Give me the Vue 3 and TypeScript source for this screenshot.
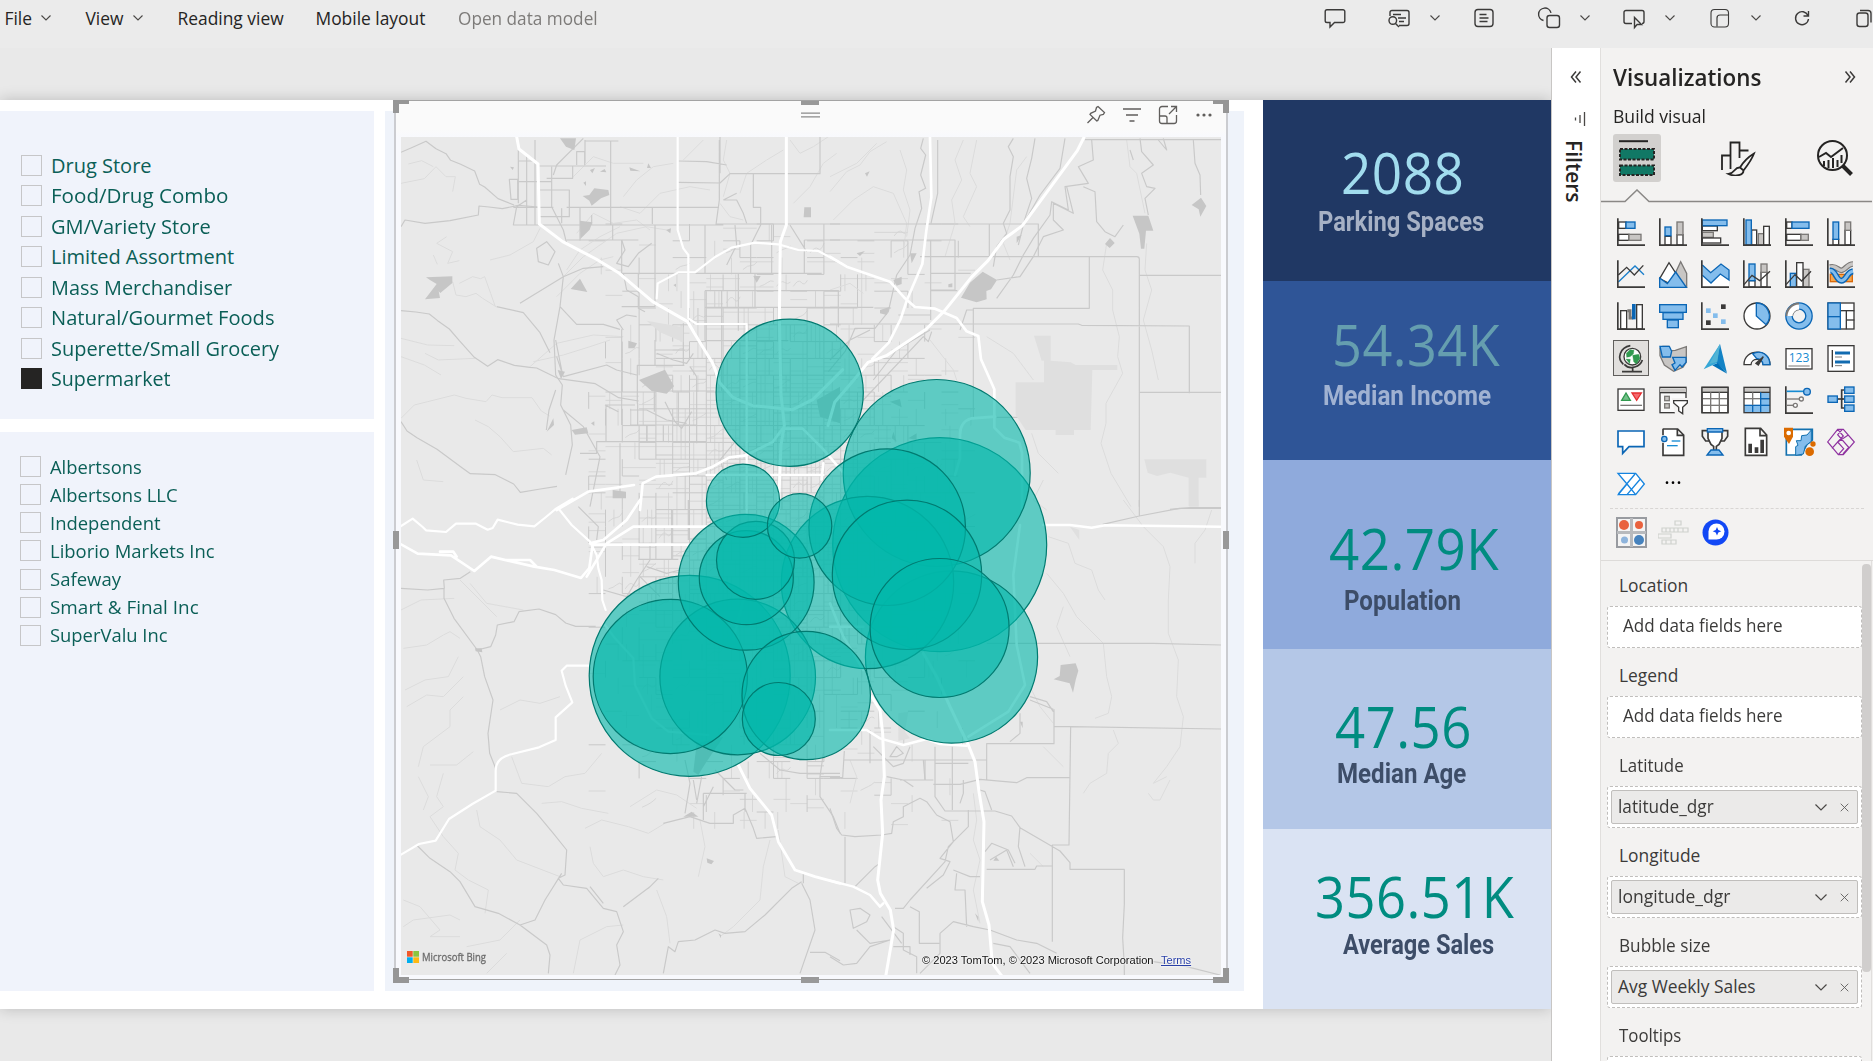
<script setup lang="ts">
interface Option { label: string; width: number; checked?: boolean }
interface Metric { value: string; valueWidth: number; valueLeft: number; label: string; labelWidth: number; labelLeft: number; top: number; gap: number; height: number; tone: string }
interface Field { label: string; width: number; value?: string; valueWidth?: number }
interface Tool { icon: string; gap: number; chevron?: boolean }

// Condenses or expands a run of text horizontally so it occupies the given width.
const vFit = {
  mounted(el: HTMLElement, binding: { value: number }) {
    const natural = el.offsetWidth
    if (!natural) return
    el.style.transform = `scaleX(${binding.value / natural})`
    el.style.marginRight = `${binding.value - natural}px`
  },
}

const storeTypes: Option[] = [
  { label: 'Drug Store', width: 101 },
  { label: 'Food/Drug Combo', width: 177 },
  { label: 'GM/Variety Store', width: 159.5 },
  { label: 'Limited Assortment', width: 183 },
  { label: 'Mass Merchandiser', width: 181 },
  { label: 'Natural/Gourmet Foods', width: 223 },
  { label: 'Superette/Small Grocery', width: 228.5 },
  { label: 'Supermarket', width: 120, checked: true },
]
const owners: Option[] = [
  { label: 'Albertsons', width: 92 },
  { label: 'Albertsons LLC', width: 127.5 },
  { label: 'Independent', width: 111 },
  { label: 'Liborio Markets Inc', width: 165 },
  { label: 'Safeway', width: 71 },
  { label: 'Smart & Final Inc', width: 149 },
  { label: 'SuperValu Inc', width: 117.5 },
]
const metrics: Metric[] = [
  { value: '2088', valueWidth: 123, valueLeft: 78, label: 'Parking Spaces', labelWidth: 166, labelLeft: 55, top: 41.5, gap: 4.5, height: 180.5, tone: 'navy' },
  { value: '54.34K', valueWidth: 168, valueLeft: 69, label: 'Median Income', labelWidth: 168, labelLeft: 59.5, top: 33, gap: 6.5, height: 179, tone: 'royal' },
  { value: '42.79K', valueWidth: 170, valueLeft: 65.5, label: 'Population', labelWidth: 117, labelLeft: 80.5, top: 58, gap: 7.5, height: 189.5, tone: 'sky' },
  { value: '47.56', valueWidth: 137, valueLeft: 71.5, label: 'Median Age', labelWidth: 129, labelLeft: 74, top: 47, gap: 2, height: 179.5, tone: 'mist' },
  { value: '356.51K', valueWidth: 199, valueLeft: 52, label: 'Average Sales', labelWidth: 151, labelLeft: 80, top: 37.5, gap: 2.5, height: 180.5, tone: 'ice' },
]
const fields: Field[] = [
  { label: 'Location', width: 69 },
  { label: 'Legend', width: 59 },
  { label: 'Latitude', width: 65 },
  { label: 'Longitude', width: 81 },
  { label: 'Bubble size', width: 91 },
  { label: 'Tooltips', width: 62 },
]
fields[2].value = 'latitude_dgr'
fields[2].valueWidth = 96
fields[3].value = 'longitude_dgr'
fields[3].valueWidth = 112
fields[4].value = 'Avg Weekly Sales'
fields[4].valueWidth = 138

const bubbles: number[][] = [
  [939.7, 544.7, 107], [689.7, 675.8, 100.5], [936.7, 473, 93.5], [951.5, 657, 86.1], [867.5, 582.5, 86.2],
  [887.2, 527.2, 78.3], [737.7, 677, 77.8], [670.3, 676.5, 77.1], [907, 574.8, 74.7], [789.7, 392.7, 73.6],
  [939.6, 628, 69.5], [746.2, 582.3, 67.9], [806.2, 695.5, 64.2], [746.3, 577.7, 47], [755.5, 560.3, 39],
  [743, 500.7, 36.6], [778.8, 719, 36.5], [799.6, 525.9, 32.2],
]
const tools: Tool[] = [
  { gap: 0, icon: '<path d="M4 3.7h16a1.8 1.8 0 0 1 1.8 1.8v9.2a1.8 1.8 0 0 1-1.8 1.8h-8.5L7 21v-4.500H4a1.800 1.800 0 0 1-1.800-1.800V5.500A1.800 1.800 0 0 1 4 3.700z"/>' },
  { gap: 40, chevron: true, icon: '<path d="M3 10V6.500a2 2 0 0 1 2-2h15a2 2 0 0 1 2 2v11a2 2 0 0 1-2 2h-8M6 8.500h8M11 12h8M12 15.500h5"/><circle cx="5.800" cy="14.500" r="3.800"/><path d="M8.500 17.500l3.500 3.500"/>' },
  { gap: 31.4, icon: '<rect x="3" y="3.500" width="18" height="17" rx="3"/><path d="M7.500 8.500h7M7.500 12h9M7.500 15.500h8"/>' },
  { gap: 40.6, chevron: true, icon: '<path d="M6.500 14.500A6.300 6.300 0 1 1 14 6.800"/><rect x="10" y="9.500" width="12.500" height="12" rx="2.500"/>' },
  { gap: 31.6, chevron: true, icon: '<path d="M10 17.500H4a2 2 0 0 1-2-2v-9a2 2 0 0 1 2-2h16a2 2 0 0 1 2 2v9a2 2 0 0 1-2 2"/><path d="M12.500 11.500v10l2.600-3h4.400z"/>' },
  { gap: 31.6, chevron: true, icon: '<rect x="3" y="3.500" width="17.500" height="17.500" rx="3.500" stroke-width="1.100"/><path d="M9 20.500V12a3 3 0 0 1 3-3h8.500" stroke-width="1.200"/>' },
  { gap: 28.2, icon: '<path d="M18 9.500A6.500 6.500 0 1 0 18.500 13M18.500 5v5h-5"/>' },
  { gap: 38, icon: '<rect x="5" y="7" width="11" height="13.500" rx="2.500"/><path d="M8 4.500h8a3 3 0 0 1 3 3v9"/>' },
]

const D = '#3b3a39', B = '#0b66b5', L = '#84bdec', G = '#7b7977', S = '#c8c6c4'
const box = (x: number, y: number, w: number, h: number, fill: string, stroke: string) =>
  `<rect x="${x}" y="${y}" width="${w}" height="${h}" fill="${fill}" stroke="${stroke}" stroke-width="4"/>`
const axis = `<path d="M2.500 1V81.500H84" fill="none" stroke="${D}" stroke-width="5"/>`
const line = (points: string, stroke: string, w = 4) => `<polyline points="${points}" fill="none" stroke="${stroke}" stroke-width="${w}"/>`
const shape = (d: string, fill: string, stroke: string, w = 4) => `<path d="${d}" fill="${fill}" stroke="${stroke}" stroke-width="${w}"/>`
const dot = (x: number, y: number, r: number, fill: string, stroke = 'none', w = 4) => `<circle cx="${x}" cy="${y}" r="${r}" fill="${fill}" stroke="${stroke}" stroke-width="${w}"/>`

const gallery: string[] = [
  box(5, 12, 22, 19, '#fff', D) + box(27, 12, 27, 19, L, B) + box(5, 49, 31, 18, '#fff', D) + box(36, 49, 36, 18, S, G) + axis,
  box(18, 55, 18, 26, '#fff', D) + box(18, 27, 18, 26, L, B) + box(54, 50, 18, 31, '#fff', D) + box(54, 12, 18, 38, S, G) + axis,
  box(4, 24, 45, 14, '#fff', D) + box(4, 6, 74, 17, L, B) + box(4, 43, 33, 15, S, G) + box(4, 60, 55, 15, '#fff', D) + axis,
  box(26, 36, 15, 45, '#fff', D) + box(9, 6, 16, 75, L, B) + box(46, 47, 16, 34, S, G) + box(62, 25, 17, 56, '#fff', D) + axis,
  box(5, 12, 16, 19, '#fff', D) + box(21, 12, 51, 19, L, B) + box(5, 49, 43, 18, '#fff', D) + box(48, 49, 22, 18, S, G) + axis,
  box(18, 64, 17, 17, '#fff', D) + box(18, 12, 17, 52, L, B) + box(54, 37, 17, 44, '#fff', D) + box(54, 12, 17, 25, S, G) + axis,

  line('4,66 54,18 81,44', '#1b7fcb') + line('4,45 29,22 52,45 79,16', D) + axis,
  shape('M46 46L65 5 83 40V82H60z', S, G) + shape('M2 56L30 8 52 42 30 70z', '#fff', D) + shape('M2 54L25 71 50 36 82 82H2z', L, B),
  shape('M4 46L30 69 58 42 84 60V82H4z', '#fff', 'none') + shape('M4 15L29 38 60 12 84 30V60L58 42 30 69 4 46', L, B) + axis,
  box(18, 62, 18, 19, '#fff', D) + box(18, 12, 18, 50, L, B) + box(54, 37, 18, 44, '#fff', D) + box(54, 12, 18, 25, S, G) + line('3,74 27,46 50,62 81,34', D) + axis,
  box(16, 40, 18, 41, L, B) + box(54, 28, 18, 53, S, G) + box(35, 8, 19, 73, '#fff', D) + line('3,74 30,44 50,63 78,34', D) + axis,
  box(10, 43, 66, 22, '#f7a54a', '#d9690b') + shape('M9 21C29 16 32 31 43 31S61 12 78 12', 'none', G, 17) + shape('M9 21C29 16 32 31 43 31S61 12 78 12', 'none', S, 10) + shape('M9 32C26 29 27 62 43 62S58 37 78 34', 'none', B, 18) + shape('M9 32C26 29 27 62 43 62S58 37 78 34', 'none', L, 9) + axis,

  box(11, 26, 18, 55, '#fff', D) + shape('M31 26H39V48H49', 'none', G, 9) + box(47, 8, 7, 42, B, B) + box(59, 8, 17, 73, '#fff', D) + axis,
  box(2, 8, 80, 23, L, B) + box(12, 32, 60, 20, L, B) + box(25, 54, 33, 23, L, B),
  `<rect x="60" y="7" width="14" height="14" fill="${D}"/><rect x="15" y="19" width="14" height="14" fill="${L}"/><rect x="36" y="34" width="14" height="14" fill="${L}"/><rect x="60" y="52" width="14" height="14" fill="${L}"/><rect x="15" y="55" width="14" height="14" fill="${D}"/>` + axis,
  dot(42, 42, 39, '#fff', D) + shape('M40 3V42L69 68A39 39 0 0 0 40 3z', L, B),
  dot(42, 42, 30, 'none', B, 23) + dot(42, 42, 30, 'none', L, 15) + shape('M13 42A29 29 0 0 1 42 13', 'none', G, 23) + shape('M15 42A28 28 0 0 1 42 15', 'none', '#fff', 15),
  box(3, 3, 78, 78, '#fff', D) + line('42,26 82,26', D) + line('58,26 58,82', D) + line('58,54 82,54', D) + box(3, 3, 37, 41, L, B) + box(3, 44, 37, 37, L, B),

  dot(46, 38, 25, '#fff', D) + shape('M28 28l11-11 12 2-2 11-10 8-10 2zM47 34l18-3 4 12-11 17-8-7zM27 45l13 1-2 13z', '#319a4f', '#319a4f', 1) + shape('M40 5C8 11-1 43 19 61M22 61C39 80 70 68 76 48M47 70V82M15 83H75', 'none', D, 5),
  shape('M3 12L11 7H29L35 20 49 19 82 8V54L72 70 44 82 16 63 3 35z', S, G) + shape('M3 7H31L38 22 34 39H10z', L, B) + shape('M41 40H81V55L69 69 63 62 48 79 39 62 48 57z', L, B),
  '<path d="M57 0L8 76 50 56z" fill="#35a7d6"/><path d="M57 0L78 88 47 57z" fill="#1383c5"/><path d="M50 57L78 89 34 64z" fill="#0071b9"/><path d="M57 0L25 60 49 53z" fill="#52b4d5"/>',
  shape('M3 62C3 12 81 12 81 62H60C59 41 25 41 24 62z', '#fff', D) + shape('M29 29C57 15 80 35 81 62H60C59 50 50 43 41 44z', L, B) + shape('M39 58L61 38 46 63z', D, D),
  box(3, 14, 78, 61, '#fff', D) + '<text x="11" y="55" font-family="Open Sans, sans-serif" font-size="37" textLength="62" lengthAdjust="spacingAndGlyphs" fill="#168bd2">123</text>' + line('10,66 74,66', G, 3),
  box(3, 5, 78, 77, '#fff', D) + line('16,18 16,70', D) + line('24,27 69,27', '#126bb0', 9) + line('24,54 69,54', '#126bb0', 9) + line('24,39 45,39', G, 3) + line('24,65 45,65', G, 3),

  box(3, 9, 78, 64, '#fff', D) + shape('M14 43L27 21 40 43z', '#74c08a', '#319a4f') + shape('M45 21H73L59 43z', '#f46c70', '#e52e30') + line('10,58 75,58', G, 4),
  box(3, 4, 78, 76, '#fafafa', D) + line('3,13 81,13', S, 12) + line('3,20 81,20', D) + box(17, 31, 14, 13, S, G) + box(17, 53, 14, 13, S, G) + '<path d="M38 36H92V84H48z" fill="#f3f2f1"/>' + shape('M44 44H85V51L71 64V83L59 75V64L44 51z', '#fff', D),
  box(3, 4, 78, 76, '#fff', D) + line('3,12 81,12', S, 12) + line('3,19 81,19', D) + line('3,38 81,38', G) + line('3,58 81,58', G) + line('29,19 29,80', G) + line('55,19 55,80', G) + box(3, 4, 78, 76, 'none', D),
  '<path fill="#fff" d="M3 20h78v60H3z"/>' + `<path fill="${L}" d="M52 20h29v60H3V58h49z"/>` + line('3,12 81,12', S, 12) + line('3,19 81,19', D) + line('3,38 81,38', G) + line('3,58 81,58', B) + line('29,19 29,58', G) + line('29,58 29,80', B) + line('53,19 53,80', B) + line('53,38 81,38', B) + box(3, 4, 78, 76, 'none', D),
  axis + line('5,16 56,16', '#168bd2', 5) + dot(66, 17, 10, L, B) + line('6,39 43,39', G) + dot(49, 39, 6, '#fff', G) + line('6,58 25,58', G) + dot(31, 58, 6, '#fff', G),
  line('30,39 48,39', D, 5) + line('52,12 44,12 44,66 52,66', D, 5) + line('44,39 54,39', D, 5) + box(3, 30, 28, 19, L, B) + box(53, 3, 28, 19, L, B) + box(53, 30, 28, 19, L, B) + box(53, 57, 28, 19, L, B),

  shape('M3 9H81V56H36L17 76V56H3z', '#fff', B, 5),
  shape('M11 3H56L74 21V82H12V44M12 22V3M55 3V22H74', '#fff', D, 5) + dot(16, 33, 8, L, B) + line('38,39 64,39', '#168bd2') + line('24,53 56,53', '#168bd2'),
  shape('M22 8H4V25L14 39H27M62 8H80V25L70 39H57', 'none', D, 5) + shape('M21 4H63V31L54 49 46 55V70H38V55L30 49 21 31z', '#fff', D, 5) + line('20,7 64,7', L, 9) + shape('M19 2H65V12H19zM30 66H54L66 81H18z', L, B),
  shape('M7 1H53L71 21V82H7zM51 1V23H71', '#fff', D, 5) + `<path fill="${D}" d="M16 47h11v28H16zM35 58h11v17H35zM52 35h11v40H52z"/>`,
  '<path d="M4 4H82V36L66 49 59 62 49 81H4z" fill="#fff" stroke="#1371af" stroke-width="5"/><path d="M50 23l16-2 13-15v34L61 54 55 78 32 82V56L39 52 34 38H48z" fill="#84bdec" stroke="#1371af" stroke-width="3"/><path d="M-3-1H24V26L12 48-3 26z" fill="#db6b00"/><circle cx="11" cy="15" r="7" fill="#fff"/><circle cx="84" cy="48" r="8" fill="#db6b00"/><circle cx="74" cy="71" r="13" fill="#db6b00"/>',
  shape('M32 4H49L82 42 49 80H34L2 42zM46 4L32 20 65 58 48 78M34 80L50 62 32 42 65 20M32 4L49 24 32 42 15 61', 'none', '#8f32a0', 3.500),

  shape('M3 10H56L82 42 56 74H4L30 42zM3 10L30 42M54 12L4 72M70 27L30 74M30 42L56 74', '#fff', '#1584df', 4),
  '<circle cx="24" cy="38" r="4"/><circle cx="42" cy="38" r="4"/><circle cx="60" cy="38" r="4"/>',
]

// Residential streets: a mile grid that breaks up and gets denser toward downtown.
let seed = 77
const rand = () => (seed = (seed * 1664525 + 1013904223) % 4294967296) / 4294967296
const streets = (() => {
  let arterial = '', local = ''
  const mile = 16.8
  for (let i = -2; i < 21; i++) {
    for (let j = 0; j < 36; j++) {
      const x = 622.3 + i * mile, y = 224 + j * mile
      const near = Math.exp(-(((x - 765) / 135) ** 2 + ((y - 500) / 200) ** 2))
      if (rand() < near * 1.5) arterial += `M${x} ${y}v${mile}`
      if (rand() < near * 1.5) arterial += `M${x} ${y}h${mile}`
      for (let k = 0; k < 5; k++) {
        if (rand() < near * 0.85) {
          const o = (1 + Math.floor(rand() * 3)) * 4.2
          local += rand() < 0.5 ? `M${x + o} ${y}v${mile}` : `M${x} ${y + o}h${mile}`
        }
      }
      if (rand() < near * 0.5) local += `M${x + 3} ${y + 12}q5 ${-9 * rand()} 8 -4t6 ${-6 * rand()}`
    }
  }
  return { arterial, local }
})()
</script>

<template>
  <div class="app">
    <header class="toolbar">
      <nav class="menu">
        <span class="entry file"><span v-fit="28" class="fit">File</span><svg class="chev" viewBox="0 0 12 12"><path d="M1.500 3.500L6 8l4.500-4.500" /></svg></span>
        <span class="entry view"><span v-fit="38" class="fit">View</span><svg class="chev" viewBox="0 0 12 12"><path d="M1.500 3.500L6 8l4.500-4.500" /></svg></span>
        <span class="entry reading"><span v-fit="106" class="fit">Reading view</span></span>
        <span class="entry mobile"><span v-fit="110" class="fit">Mobile layout</span></span>
        <span class="entry muted"><span v-fit="139.500" class="fit">Open data model</span></span>
      </nav>
      <div class="tools">
        <span v-for="(t, i) in tools" :key="i" class="tool" :style="{ marginLeft: t.gap + 'px' }">
          <svg class="tool-icon" viewBox="0 0 24 24" v-html="t.icon"></svg>
          <svg v-if="t.chevron" class="chev" viewBox="0 0 12 12"><path d="M1.500 3.500L6 8l4.500-4.500" /></svg>
        </span>
      </div>
    </header>

    <div class="workspace">
      <main class="stage">
        <div class="page">
          <div class="slicers">
            <section class="slicer types">
              <div v-for="o in storeTypes" :key="o.label" class="option">
                <i class="check" :class="{ on: o.checked }"></i><span v-fit="o.width" class="fit">{{ o.label }}</span>
              </div>
            </section>
            <section class="slicer owners">
              <div v-for="o in owners" :key="o.label" class="option">
                <i class="check"></i><span v-fit="o.width" class="fit">{{ o.label }}</span>
              </div>
            </section>
          </div>

          <section class="map-panel">
            <div class="visual">
              <div class="visual-head">
                <svg class="grip" viewBox="0 0 20 6"><path d="M0 1h20M0 5h20" /></svg>
                <svg class="act" viewBox="0 0 20 20"><path d="M12 1.500l6.500 6-1.200 2-3.300.7-2.200 5.300-1 .5L4 9.500l.7-1.200L9.500 6l1-3.500zM7 12.500L1.500 18" /></svg>
                <svg class="act" viewBox="0 0 20 20"><path d="M1 4h18M4 10h12M7.500 16h5" /></svg>
                <svg class="act" viewBox="0 0 20 20"><path d="M10 1.500H4a2.500 2.500 0 0 0-2.500 2.500v12A2.500 2.500 0 0 0 4 18.500h12a2.500 2.500 0 0 0 2.500-2.500v-6M1.500 11H7a2 2 0 0 1 2 2v5.500M11 9l7-7M13 1.500h5.500V7" /></svg>
                <svg class="act dots" viewBox="0 0 20 20"><circle cx="4" cy="10" r="1.600" /><circle cx="10" cy="10" r="1.600" /><circle cx="16" cy="10" r="1.600" /></svg>
              </div>
              <div class="map">
                <svg class="map-art" viewBox="401 137 820 838">
                  <rect x="401" y="137" width="820" height="838" fill="#e9e9e9" />
                  <g fill="none" stroke-linejoin="round">
                    <path :d="streets.local" stroke="#d2d2d2" stroke-width=".8" />
                    <path :d="streets.arterial" stroke="#c8c8c8" stroke-width="1" />
                  </g>
                  <!-- north-west -->
                  <g transform="translate(390 90) scale(.33333)" fill="none" stroke-linejoin="round">
                    <g stroke="#dcdcdc" stroke-width="3">
                      <path d="M33 280l70-14 35-36 30 30 28 0-8 45M130 230l-35-18-40 10M170 440l-30 20 48 25-15 35 35-8M130 495l12 28M208 580l40-20 24 6 12-6 18 50 14 40M188 575l10 40 30 5 30-10 20 15 40 25M33 745l80 20 80 2M105 790l40 20 110-5M33 800l70 25 50 30M33 985l40-40 40-10 80-20 35 10 60 10 18-20 30 8 90 0 28 40 25 15M255 990l40 20 35 30 40 45 90-10 25 20M80 1110l20 60 60 5M300 510l60-15 70-40 20-40M420 830l80-70 110-25 90 5M430 815l90-20 80-25 60-20M520 560l60-60 100-70 90-20 60 10M530 540l40-60 60-40 60-30M500 620l70-70 60-40 40-10M700 320l40-50 50-40 60-10M690 350l60 20 60-60 90-20 60 10M1010 150l-10 60 20 40-20 70M1050 310l20-60 60-40 50-30M880 210l60-60M990 340l30 40 40 10M550 260l60-60 60 20 90 0M560 430l50-60 60 30 70-10 40 30M1200 150l30 40 40-20 60-40M1210 340l50-50 40-70 40-30" />
                    </g>
                    <g stroke="#c9c9c9" stroke-width="3.500">
                      <path d="M33 187l35-15 40-18 30 22 30 15 14 20 30 12 42 20 15 40 15 8 40 35 48 19M33 410l12-20 60 10 75-8 85-17 2-27 30 3 40 5 48-10 60 5" />
                      <path d="M33 662l45 4 40 6 25 20 35 25 30 35 45 50 40 27 30-20 50 17 47 6 20 2 66 32 110 15 70 42 60 10M33 995l18 28 30 20 60 35 75 55 25 18 75 3 55 28 20 25 60-10 50-8" />
                      <path d="M410 330l-30 20-10 55 78 0M358 268h25v60h-20zM385 180v160M410 195v210M435 150v255M385 213h50M385 275h100M370 352h120M448 405h552M448 380h90v-80h-90M485 230v120l35 70 10 40M448 228h200M470 265h78v-38M560 225v-40h24v40M585 150v70M548 265v-35M490 255l10-30 80-80M585 153h100M440 475l30-20 25 30-20 40-30-10zM505 520l15 40-10 90-18 100 5 105 20 30-5 60 30 60 5 60-20 90M520 560l-130 80M510 650l50 53h80l50 15M520 560l60-25 60-5M497 750l20 100M500 800l20 60 130-35 30 15 60 15M497 900l-20 60-8 60M520 960l60 50 50 90-30 150M400 668l-80-18M400 668l50 60 30 60M530 450h215M695 550h600M662 153v252M668 405v45M570 352v100M605 405v-30M515 355v45M530 352h457M695 450v100M795 405v245M745 550v60M787 352v50M865 213l85 2 60 10M865 277l125 2 30-28h270v-111M988 150v180l-10 74M990 250v-110M1090 250v102h22v53l-30 60v85M978 402h372M1145 405v145M1035 405l5 60-30 60M945 405v145M880 410v0M695 650h100M695 718v287M795 750v76h-53v115M743 826h140M880 700v125M920 860l-20-30M945 602h400M945 602v150M945 652h400M945 752h250M995 602v300M1045 552v170M1095 552v100M793 780h90M720 1005h200M645 945h90M648 945v110h300M743 940v65M770 1005v50M820 1005v50M650 1055h-30v35h-50M690 1060v160M645 945l40 20M742 826v30M865 905v100M793 903h180M793 905v60M920 860v200M865 903h60M890 1000l-60-10-60-30-50 0" />
                      <path d="M695 450l10 30-25 40 35 10 30-40 40-30M700 550l10 50 35 20 0 35 20 10M700 720l-20-30 30-15 30 5M1040 310l-40 20M1000 330h40l20 40 10 30M1040 1050l-50 60 20 60M800 790l50 20 40 10 20-30M825 935l30 60 20 20 30-50M1200 405l50 80M1243 450h107M1243 450v100" />
                    </g>
                    <g fill="#c6c6c6" stroke="none">
                      <path d="M510 145h48l-5 35-25-10zM578 318l20-3 15-20 42 5 3 15-25 10-28 22-7-15zM570 392l37 5-8 22-28 28zM570 566l22 40-50-9zM108 562l79-3v20l-36 30-5-5 4 20-45 4 35-46-20-12zM747 870l78-31 27 50-22 22-45-8zM715 752l26 8-8 15h-18zM545 1020l45-8 5 18-40 4zM470 1025l20-40 2 20zM503 840l22 5-12 22zM1243 352h20v30h-22zM1090 558l22 0-12 20zM718 232l33 12-30-2zM828 420l15-5-2 15zM1280 930l70-40v110l-60-20z" />
                      <path d="M600 240l15-6-8 16zM630 245l14-8 5 10zM775 220l8 14h-12zM580 278l8-4v14zM603 1000l10-6v14zM850 585l8-4v10zM668 1200l40 5v20h-40zM360 230l12 2-4 8z" />
                      <path d="M770 692l110 20v45l-70-30z" fill="#dfdfdf" />
                    </g>
                    <g stroke="#fff" stroke-width="6.500" stroke-linecap="round">
                      <path stroke-width="9" d="M380 140l7 37 57 45 4 180 70 53 100 52 70 43 100 85 105 60 20 35 55 90 5 12 15 45 40 45 60 25 120 12 60-30 90-90" />
                      <path stroke-width="9" d="M1189 140v265l-18 50-3 230 5 230 10 90-10 60-8 200" />
                      <path d="M863 140v280l17 55 15 20v190l25 17h150v570M800 625l3-45 62-33 50 0 60-46 50-28 70-15 70 5 60 17 60 3 70 38" />
                      <path stroke-width="8" d="M500 1260l95-55 70-10 67-10M750 1260l8-80 40-20 120-10 50-20 50-28 50-6 80-40 30-40 60 0 60 60 60 70M950 1155h350M1300 1120l-5 48" />
                    </g>
                  </g>
                  <!-- north-east -->
                  <g transform="translate(830 90) scale(.33333)" fill="none" stroke-linejoin="round">
                    <g stroke="#dcdcdc" stroke-width="3">
                      <path d="M0 305l50-60 40-20 30-40 50-30M0 260l80-40 60-60M10 390l60-60 60-40 60 20 40 90-10 90M210 180l20 60-10 60 20 60-10 80M400 150l-25 60 20 60-30 60 10 70-30 100M440 150l-20 100 20 40-40 90 20 30M590 200l-30 40-20 160-20 60 20 50M890 150l10 80 20 20 25 120M950 460l-5 80 20 60-25 90 25 90 20 90M830 460l-12 80 30 60 0 60 20 80-5 60 15 50-50 90 0 60-15 60 30 90 60 100M300 750l70 90 10 30M470 740l80 50 60 80M605 1030l20 60 60 60M640 1170l-30 60 40 30M0 600l60-20 40 30" />
                    </g>
                    <g stroke="#c9c9c9" stroke-width="3.500">
                      <path d="M765 149h408M0 402h625v98M478 402v98M0 450h375v150h-73M302 450v240M270 500h650q8 0 8 8v742M778 500v155H430v330M302 550h120M302 602h80M0 652h130M0 702h745l10 4 323 2v202M928 556h245M928 907h245M0 602h25v110M323 150v160l-20 90M205 675h95M500 982h180" />
                      <path d="M280 145l-8 30 15 20-15 60 15 40-20 10 8 50-20 60-15 80-40 60-25 110-40 50-60 0-30 70-50 60M550 145l-15 25 15 30-10 60v100l-20 40 10 30-30 40-10 60M615 145l-10 60-15 60 15 60-20 60-20 80M705 145l-15 90-60 80-40 70M785 150l5 60-45 20 30 50-70 10 10 70-50-25-5 40-50 70-30 50-30 60-50 70M710 290l20 80-60-30 0 50 30 30-60 20-30 60-40 60-70 10M760 290l35 15 5 90 25 30 30 15 25-35M930 145l5 40 35 40-35 25 15 40 25 5-30 30 10 50M1090 150l5 70 15 35 2 60M900 180l10 30M985 150l25 30-10-35M100 930l180-190 15 15 10-30M0 810l60-60 60-30M130 870l70-90 100-60M430 660l-20 0-20 60M665 922h20l-8 30zM688 922h20l-12 30-6 30h-15M687 925v50M1020 1258l60-5h93" />
                    </g>
                    <g fill="#c6c6c6" stroke="none">
                      <path d="M908 377h47l15 45-22 0-5 54h-10l-5-45zM1085 345l28-22 16 25-18 32-5-22zM825 462l15-18 14 15-15 15zM420 578l38-33 43 25-18 28-14 5 1 25-30 9-47-14zM190 570l25-10v22l-15 5zM240 490l20 0-15 30zM180 935l30-8 5 25zM80 490l25-7-15 15zM300 0M355 583l12-3v12h-12zM105 250l14-6-8 16zM150 660l30-10-10 25-20-5zM560 440l15-5-15 25zM190 1025l10 30-15-10zM235 1045l25-15v20z" />
                      <path fill="#dfdfdf" d="M612 737h50v75l60 5 15 8h125v15h-75l-5 180h-50v15h-55v-15h-90l-30-45v-98h85v-65h-7zM943 1108h186v55h-23v85h-30v-85l-55-15-40 10-28-10z" />
                    </g>
                    <g stroke="#fff" stroke-width="8" stroke-linecap="round">
                      <path stroke-width="9" d="M762 142l-20 40-110 150-55 75-55 40-48 65-50 50-80 100-55 55-120 80-55 20-40 50-60 70-20 70" />
                      <path d="M300 142l4 180-15 100-12 100-45 105-20 60-35 70-50 50" />
                      <path d="M0 500l50 30 130 45 45 50 30 26 60 5 65 28 30 40 35 14 8 70 40 90v115l30 30 45 15 8 30v170M495 980l-70 5q-35 10-35 50v70l-15 50" />
                    </g>
                  </g>
                  <!-- south-west -->
                  <g transform="translate(390 500) scale(.33333)" fill="none" stroke-linejoin="round">
                    <g stroke="#dcdcdc" stroke-width="3">
                      <path d="M40 445l70-10 50-30 20-10 30 20M45 570l60-30 70-10 30-60M50 620l60-35 50 5 60-60M220 590l-40 40 0 50-80 60-15 60M330 630l60-30 60 10 60-20M120 795h80l50-40M85 830l30 60-15 40M160 820l-20 70 20 30-40 30 40 60 45 50-10 50 40 30 60 30-10 70M260 930l10 50 60 40 50 60 130 50M365 770l30 80 80 10 50-30 60-10 50-60M455 910l60-5 60 20 80 15M600 1040l10 50 30 40 60-20 60 20 60 10M720 920l80-50 60 15 60 40M585 985l50-25 80 20 60 20 50-30M930 960l15 80-20 90M1140 1020l-20 80-10 100-80 80-40 30M1165 990l20 140 40 20M40 1200l50 20 60 70-30 20 90 0M40 1280l30-20 110-15 30 15M230 1340l100-20 60-60M290 1420l60-60M550 1420l20-100 80-40 50-5M800 1170l30 80 10 80M33 330l60-30 100-5M240 250l50 60 110 20M210 240l60 60 50 50" />
                    </g>
                    <g stroke="#c9c9c9" stroke-width="3.500">
                      <path d="M33 265l80 5 50-5-2-25 50-5 30-20M162 265l0 30 30 60 70 95 10 20 12 60 25 70-15 100 5 60 18 45M262 450l40-10 15-35 5-30 50-10 15-30 60-8 50 17 30 25 30 10h60M320 875l60 5 60 60 50 60 40 50-5 75-20 10 15 20 70 10 50 60 40 10 20 60-20 40 10 60-15 30M80 1035l40 40 60 40 30 30 45 75 70 20 65 35 45-15 30-60 50-80M390 1275l80 60 10 30-5 55M600 1160l40 50M775 1165l30-30M700 1220l80-60M820 1420l15-80 20 15 10-30 50-5 60-30 30 10 60-5 60-50 80-80 30-20M1235 1150l25 50 15 90-45 130M1260 1357h45l45 25M1110 760l60 50 60 10 120 0M1290 830l0 60 40 60 20 50M940 880h130M940 880v70M1065 880v55M820 970l80-20 60 20 70 0 0-25 35-20 25 60 10 30 60-5M975 810l60 60 25 0M885 780l15 70-15 90M910 840l10 60M935 830l-15 80M970 860l-30 60 0 40M1240 1120v30" />
                      <path d="M780 180l-40 60-30 50-70-20M745 178h120M780 178v-50M620 120l5-40-60-60M845 30v150M895 0v120M770 200l60 20 40-10M790 250h70M750 230l60 60M1300 760l-10 70 60 0" />
                    </g>
                    <g fill="#c6c6c6" stroke="none">
                      <path d="M950 1075l22 8-8 10-12-5zM880 950l25-15 20 15zM255 445h20l2 12-20-3zM920 730l80-20-60 90-15 25-15-10zM985 1300l8 5v10z" />
                    </g>
                    <g stroke="#fff" stroke-width="6.500" stroke-linecap="round" stroke-linejoin="round">
                      <path d="M33 78l35-22 30 25 10 10 60 5 30-25 60 0 35 18 15-5 15-25 60 15 50 5 35-28 30-25 50-30M505 25l40 50 55 50 20 40 5 40 10 35 2 60 10 30" />
                      <path stroke-width="8" d="M33 133l50 28 100 5 70 47 50-43 130 30 60 10 80 24 25-30 10-70h290M600 130l40-10 70-60 40-60M590 230l60-100 80-50h220M150 155l40 0 10 15M350 180l70 0 20 20" />
                      <path d="M600 497l-70 0-15 15 12 45 20 50-50 45v68l-50 22-80 20q-50 10-50 50v60l-70 40-70 45-40 65-50 10-54 32" />
                      <path stroke-width="8.500" d="M1045 795l35 70 65 80 20 80 50 85 60 20 75 20" />
                      <path d="M645 375l30 40 55 60 5 80 50 100 50 40 120 10M1060 300l-30 120" />
                    </g>
                  </g>
                  <!-- south-east -->
                  <g transform="translate(830 500) scale(.33333)" fill="none" stroke-linejoin="round">
                    <g stroke="#dcdcdc" stroke-width="3">
                      <path d="M880 0l60 80 60 60 20 60-5 100 0 100 30 80-5 110 20 60-10 90-40 60-40 50 40-20M1145 30l-20 60-30 40 0 60M655 110l60 20 20 60 50 20 20 60 20 30M650 220l50 60 40 70 80 80 10 100 15 60-10 50-40 15M700 320l-20 60 40 90M850 690l15 40-30 30-5 60-50 30-20 30M955 880l15 20 20 0 30-60M600 560l30 60 40 50M60 780l20 50-20 80M430 880l10 80-10 60 20 60-20 90 20 100M600 1060l40 40M640 740l60 60" />
                    </g>
                    <g stroke="#c9c9c9" stroke-width="3.500">
                      <path d="M928 0v48l120-23h125M928 48l-110 25M470 430h500l203 5M672 679l501 8M722 680l-5 355h-50v290M672 628v103H470v110M718 833H590l-30 15-110-10-60 15-80 0M0 833h38l5-80M40 780h430M315 740v150l30 43h150l50 15 25 35 120 70 30 35v20h163v105l-5 100 5 85v47M600 600l70 28M600 590l50 15 20 30M570 640l0 60-30 25M367 740v190M470 1108h145l5-10h47M465 1055l20-25 50 20 20 40M570 980l-5 60 20 60M450 870l15 5 20 55M415 930l0 50-60 60-10 45-105 115-20 25h-25M45 1010l0 140M0 925l20 60 15 20 40 5 80-5 30-5 5-35 30-15 0-30 50-25 20 10 30 40 40 20 10 60-40 50 30 10-20 40-50 40M60 1230l30-5 30 20-10 20-40 20zM80 1290l40 40 60-10M190 1280l30 20 0 50 40 20 0 50M240 1220l28 15v95h60M0 1370l40 25 40-5 40-50 60-20M330 1300l40-35 60 15 50 10 80 30 60 10 60 30M330 1300v60l-60 60M490 1330l50 10 60 80M370 1110l50 20 30 0M380 1120l-5 50 30 0 5 110M75 1160l60-60 15-10M970 1385l100 15 100 25M400 840l0 40-10 30M315 790h100M280 780l5 60" />
                      <path d="M130 740l60 60 30-10 20-50M170 830l50 10 30 20M180 770l20-30 20 20-20 10zM210 840h100M120 690v100M285 780v60M480 1080l50-30 20 50M190 1340h50v25M155 1250l60 80" />
                    </g>
                    <g fill="#c6c6c6" stroke="none"><path d="M692 495l45-5 8 22-8 28-8 38-10-28-48-12 18-10zM490 1082l8-12 10 12zM435 1240l10 10v15zM570 665h8v20z" /><path fill="#dfdfdf" d="M720 80l28 10v30zM205 640l30-5-10 60 15 20-35 8zM1078 0h28v20h-28z" /></g>
                    <g stroke="#fff" stroke-width="7.500" stroke-linecap="round">
                      <path d="M640 75l80 0 65 8 40-7 348 4M0 690l110 0 40 25 70 20 70-18 40 15 80 5" />
                      <path stroke-width="9" d="M125 590l25 40 8 70 5 130-10 70 5 100-15 140 8 40 30 50 10 60-30 175" />
                      <path stroke-width="9" d="M280 460l40 70 40 90 55 115 20 50 12 90 15 90-5 240 20 70 10 115 30 40" />
                      <path d="M0 1142l70 18 50 25 30 35 10-10M570 75l-20 150 10 210 25 120-50 80-120 75M0 310l40 100 60 100M0 380h100" />
                    </g>
                  </g>
                  <g fill="#01b8aa" fill-opacity=".6" stroke="#017a70" stroke-width="1.200">
                    <circle v-for="(b, i) in bubbles" :key="i" :cx="b[0]" :cy="b[1]" :r="b[2]" />
                  </g>
                </svg>
                <div class="bing"><svg viewBox="0 0 12 12"><path fill="#f1592a" d="M0 0h5.700v5.700H0z" /><path fill="#8bc540" d="M6.300 0H12v5.700H6.300z" /><path fill="#00aeef" d="M0 6.300h5.700V12H0z" /><path fill="#fdb913" d="M6.300 6.300H12V12H6.300z" /></svg><span v-fit="64" class="fit">Microsoft Bing</span></div>
                <div class="credits"><span v-fit="231" class="fit">© 2023 TomTom, © 2023 Microsoft Corporation</span><a v-fit="30" class="fit terms">Terms</a></div>
              </div>
              <i class="corner tl"></i><i class="corner tr"></i><i class="corner bl"></i><i class="corner br"></i>
              <i class="handle top"></i><i class="handle bottom"></i><i class="handle left"></i><i class="handle right"></i>
            </div>
          </section>

          <section class="metrics">
            <div v-for="m in metrics" :key="m.label" class="metric" :class="m.tone" :style="{ height: m.height + 'px', paddingTop: m.top + 'px' }">
              <div class="number" :style="{ paddingLeft: m.valueLeft + 'px' }"><span v-fit="m.valueWidth" class="fit">{{ m.value }}</span></div>
              <div class="caption" :style="{ paddingLeft: m.labelLeft + 'px', marginTop: m.gap + 'px' }"><span v-fit="m.labelWidth" class="fit">{{ m.label }}</span></div>
            </div>
          </section>
        </div>
      </main>

      <aside class="filters">
        <svg class="double" viewBox="0 0 12 14"><path d="M6 1.500L1.500 7 6 12.500M10.500 1.500L6 7l4.500 5.500" /></svg>
        <svg class="filter-icon" viewBox="0 0 12 14"><path d="M1.500 5.500v3M6 3v8M10.500 0v14" /></svg>
        <span class="filters-title">Filters</span>
      </aside>

      <aside class="viz">
        <div class="viz-title"><span v-fit="148" class="fit">Visualizations</span><svg class="double" viewBox="0 0 12 14"><path d="M1.500 1.500L6 7l-4.500 5.500M6 1.500L10.500 7 6 12.500" /></svg></div>
        <div class="viz-sub"><span v-fit="93" class="fit">Build visual</span></div>
        <div class="tabs">
          <span class="tab active"><svg viewBox="0 0 36 36"><path d="M0 1.200h29" stroke="#252423" stroke-width="2" /><path d="M1 9h34v10.500H1zM1 25.500h34V35H1z" fill="#117865" stroke="#252423" stroke-width="2" stroke-dasharray="3 1.500" /></svg></span>
          <span class="tab brush"><svg viewBox="0 0 36 36" fill="none" stroke="#252423" stroke-width="1.800"><path d="M2 30V15.500h8.500M10.500 29V2.500h9V18M19.500 10.500h9" /><path d="M34 13.500c-5 3-11 9-14 14l3.500 3C27 26 32 19 34 13.500zM20 27.500c-6-.5-4.500 5.500-11.500 6.500 6.500 3 15 1.500 15-3.500" /></svg></span>
          <span class="tab"><svg viewBox="0 0 36 36" fill="none" stroke="#252423" stroke-width="2"><circle cx="15.500" cy="15.500" r="14.500" /><path d="M2 17l7-4 5 4 12-9M7 26v-5M11.500 28v-8M16 28V18M20.500 27v-7M24.500 23v-8" /><path d="M25.500 25.500l9 9" stroke-width="4" /></svg></span>
        </div>
        <svg class="notch" viewBox="0 0 271 14"><path d="M0 12.500h24L36 1l12 11.500h223" /></svg>
        <div class="gallery">
          <span v-for="(g, i) in gallery" :key="i" class="cell" :class="{ selected: i === 18 }"><svg viewBox="0 0 84 84" v-html="g"></svg></span>
        </div>
        <div class="custom">
          <svg viewBox="0 0 31 31"><rect x="1" y="1" width="29" height="29" fill="#f4f4f4" stroke="#989ba0" stroke-width="2" /><path d="M15.500 1v29M1 15.500h29" stroke="#b8babd" stroke-width="3" /><circle cx="8" cy="8" r="5" fill="#e9623e" /><circle cx="23" cy="8" r="4" fill="#e9623e" /><circle cx="8.500" cy="23" r="3.500" fill="#8eb4dc" /><circle cx="23" cy="23" r="5" fill="#4682bd" /></svg>
          <svg viewBox="0 0 31 31" fill="none" stroke="#cfd1ce" stroke-width="1.200"><path d="M17 4h6v4h-6zM4 11h26v4H4zM8 11v4M12 11v4M16 11v4M20 11v4M25 11v4M0 17h13v4H0zM4 23h14v4H4zM8 23v4M13 23v4" /></svg>
          <svg viewBox="0 0 31 31"><circle cx="15.500" cy="15.500" r="13" fill="#1248f5" /><path d="M8.500 22.500v-8a8 8 0 1 1 8 8z" fill="#fff" /><path d="M17 10l1.300 3 3 1.300-3 1.300L17 18.500l-1.300-2.900-3-1.300 3-1.300z" fill="#1248f5" /></svg>
        </div>
        <div class="wells">
          <div class="well-list">
            <div v-for="f in fields" :key="f.label" class="field">
              <div class="field-label"><span v-fit="f.width" class="fit">{{ f.label }}</span></div>
              <div class="well">
                <div v-if="f.value" class="chip"><span v-fit="f.valueWidth" class="fit">{{ f.value }}</span><span class="grow"></span><svg class="chip-chev" viewBox="0 0 12 12"><path d="M.5 3.500L6 9l5.500-5.500" /></svg><svg class="chip-x" viewBox="0 0 10 10"><path d="M.8.800l8.400 8.400M9.200.800L.8 9.200" /></svg></div>
                <span v-else v-fit="160" class="fit hint">Add data fields here</span>
              </div>
            </div>
          </div>
          <div class="track"><div class="thumb"></div></div>
        </div>
      </aside>
    </div>
  </div>
</template>

<style>
body { overflow: hidden; }
</style>

<style scoped>
* { box-sizing: border-box; }
.app { width: 1873px; height: 1061px; overflow: hidden; background: #ebebeb; color: #252423; font-family: "Open Sans", "Noto Sans", sans-serif; font-size: 17.400px; white-space: nowrap; }
svg { display: block; flex: none; }
.fit { display: inline-block; transform-origin: 0 50%; flex: none; }

.toolbar { height: 48px; display: flex; position: relative; z-index: 2; }
.menu { display: flex; height: 36px; align-items: center; padding-left: 4.500px; width: 1322.600px; flex: none; }
.entry { display: flex; align-items: center; }
.entry .chev { margin-left: 8px; }
.file { width: 81px; }
.view { width: 92px; }
.reading { width: 138px; }
.mobile { width: 142px; }
.muted { color: #7d7b79; }
.chev { width: 12px; height: 12px; fill: none; stroke: #4a4846; stroke-width: 1.100; }
.tools { display: flex; height: 36px; align-items: center; }
.tool { display: flex; align-items: center; flex: none; }
.tool .chev { margin-left: 18px; }
.tool-icon { width: 24px; height: 24px; fill: none; stroke: #3b3a39; stroke-width: 1.400; }

.workspace { display: flex; height: 1013px; }
.stage { width: 1551px; flex: none; padding-top: 52px; background: #e9e9e9; overflow: hidden; }
.page { height: 909px; display: flex; background: #fff; box-shadow: 0 0 14px rgba(0, 0, 0, .2); }
.slicers { width: 374px; flex: none; padding-top: 11px; display: flex; flex-direction: column; gap: 13px; color: #0b5f57; }
.slicer { background: #f0f3fb; padding-left: 20px; }
.types { height: 308px; padding: 39px 0 0 20.500px; font-size: 20px; }
.owners { height: 559px; padding-top: 20.500px; font-size: 18.800px; }
.option { display: flex; align-items: center; height: 30.500px; gap: 9.500px; }
.owners .option { height: 28.150px; gap: 9px; }
.check { width: 21px; height: 21px; border: 1.500px solid #c6c6c8; flex: none; }
.owners .check { border-width: 1px; }
.check.on { background: #252423; border-color: #252423; }

.map-panel { position: relative; width: 859px; height: 880px; flex: none; margin: 11px 19px 0 11px; background: #eff3fa; }
.visual { position: absolute; left: 9px; top: -11px; width: 834px; height: 880px; background: #f8f9fd; border: 2px solid #cbccd0; border-top: 1px solid #a3a3a3; border-bottom: 1px solid #a3a3a3; padding: 0 5px; }
.visual-head { height: 36px; margin: 0 -5px; background: linear-gradient(#fafafa 80%, #f8f9fd); display: flex; align-items: center; justify-content: flex-end; gap: 16px; padding: 0 12px 9px 0; position: relative; }
.act { width: 20px; height: 20px; fill: none; stroke: #605e5c; stroke-width: 1.300; }
.act.dots { fill: #605e5c; stroke: none; }
.grip { position: absolute; left: 405px; top: 11px; width: 19px; height: 6px; stroke: #8a8a8a; stroke-width: 1.200; }
.map { position: relative; width: 820px; height: 838px; overflow: hidden; }
.map-art { width: 820px; height: 838px; }
.bing { position: absolute; left: 5.500px; bottom: 10.500px; height: 16px; display: flex; align-items: center; gap: 3px; font-size: 11px; color: #6b6b6b; -webkit-text-stroke: .3px #6b6b6b; }
.bing svg { width: 12px; height: 12px; }
.credits { position: absolute; left: 520.500px; bottom: 7px; height: 16px; display: flex; align-items: center; gap: 8px; font: 10.700px "Liberation Sans", sans-serif; color: #111; text-shadow: 0 0 2px #fff, 0 0 2px #fff; }
.terms { color: #2a41a8; text-decoration: underline; }
.corner { position: absolute; width: 16px; height: 15px; border: 0 solid #969696; }
.tl { left: -3px; top: -1px; height: 13px; border-left-width: 6px; border-top-width: 4px; }
.tr { right: -3px; top: -1px; height: 13px; border-right-width: 6px; border-top-width: 4px; }
.bl { left: -3px; bottom: -4px; border-left-width: 6px; border-bottom-width: 6px; }
.br { right: -3px; bottom: -4px; border-right-width: 6px; border-bottom-width: 6px; }
.handle { position: absolute; background: #999; }
.handle.top { left: 405px; top: 0; width: 18px; height: 4px; }
.handle.bottom { left: 405px; bottom: -4px; width: 18px; height: 6px; }
.handle.left { left: -3px; top: 430px; width: 6px; height: 18px; }
.handle.right { right: -3px; top: 430px; width: 6px; height: 18px; }

.metrics { width: 288px; flex: none; }
.number { height: 60px; line-height: 60px; font-size: 57px; letter-spacing: .5px; color: #008c80; }
.caption { height: 32px; line-height: 32px; font-family: "Liberation Sans Narrow", Roboto, sans-serif; font-size: 28px; font-weight: 700; color: #3d4d68; }
.navy { background: #203864; }
.navy .number { color: #a1dcee; }
.navy .caption { color: #a6b1c5; }
.royal { background: #2f5597; }
.royal .number { color: #659eaf; }
.royal .caption { color: #a0b2d2; }
.sky { background: #8faadc; }
.mist { background: #b4c7e7; }
.ice { background: #dae3f3; }

.filters { width: 49px; flex: none; background: #fff; border-left: 1px solid #c8c6c4; display: flex; flex-direction: column; align-items: center; padding-top: 22px; }
.double { width: 12px; height: 14px; fill: none; stroke: #3b3a39; stroke-width: 1.500; }
.filter-icon { width: 12px; height: 14px; margin: 28px 0 0 7px; fill: none; stroke: #4a4846; stroke-width: 1.300; }
.filters-title { writing-mode: vertical-rl; font-size: 21px; line-height: 28px; font-weight: 600; margin: 14px 0 0 -4px; }

.viz { width: 273px; flex: none; background: #f3f2f1; border-left: 1px solid #e1dfdd; display: flex; flex-direction: column; }
.viz-title { margin: 13px 17px 0 12px; height: 32px; line-height: 32px; font-size: 23px; font-weight: 600; display: flex; justify-content: space-between; align-items: center; }
.viz-sub { margin: 11px 0 0 12px; height: 24px; line-height: 24px; font-weight: 500; }
.tabs { display: flex; margin: 6px 0 0 12px; gap: 51px; }
.tab { width: 48px; height: 48px; display: flex; align-items: center; justify-content: center; border-radius: 3px; }
.tab.brush { padding-left: 4px; }
.tab svg { width: 36px; height: 36px; }
.tab.active { background: #d2d0ce; }
.notch { width: 271px; height: 14px; margin-top: 7px; fill: none; stroke: #8a8886; stroke-width: 1.500; }
.gallery { display: grid; grid-template-columns: repeat(6, 42px); grid-auto-rows: 42px; margin: 8px 0 0 9px; }
.cell { display: flex; align-items: center; justify-content: center; width: 36px; height: 36px; margin: 3px; border: 1px solid transparent; }
.cell svg { width: 28px; height: 28px; overflow: visible; }
.cell.selected { background: #e1dfdd; border-color: #605e5c; }
.custom { display: flex; gap: 11px; margin: 3px 9px 0; padding: 8px 0 12px 6px; border-top: 1px dashed #d8d6d4; height: 52px; }
.custom svg { width: 31px; height: 31px; }
.wells { flex: 1; min-height: 0; border-top: 1px solid #dddbd9; display: flex; overflow: hidden; color: #3b3a39; }
.well-list { width: 261px; flex: none; padding-left: 6px; }
.field { height: 90px; padding-top: 12px; }
.field-label { height: 24px; line-height: 24px; margin: 0 0 9px 12px; }
.well { height: 42px; background: #fff; border: 1px dashed #c0bebc; border-radius: 3px; padding: 3px; line-height: 24px; }
.hint { padding: 3px 0 0 0; margin-left: 12px; }
.chip { height: 34px; background: #ebeae9; border: 1px solid #c0bebc; border-radius: 2px; display: flex; align-items: center; padding: 0 8px 0 6px; }
.chip .fit { line-height: 24px; position: relative; top: -1px; }
.grow { flex: 1; }
.chip-chev { width: 12px; height: 12px; margin-right: 13px; fill: none; stroke: #4a4846; stroke-width: 1.200; }
.chip-x { width: 9px; height: 9px; fill: none; stroke: #605e5c; stroke-width: 1; }
.track { width: 10px; padding-top: 3px; border-right: 1px solid #e1dfdd; }
.thumb { width: 9px; height: 408px; border-radius: 4px; background: #d0cecd; }
</style>
